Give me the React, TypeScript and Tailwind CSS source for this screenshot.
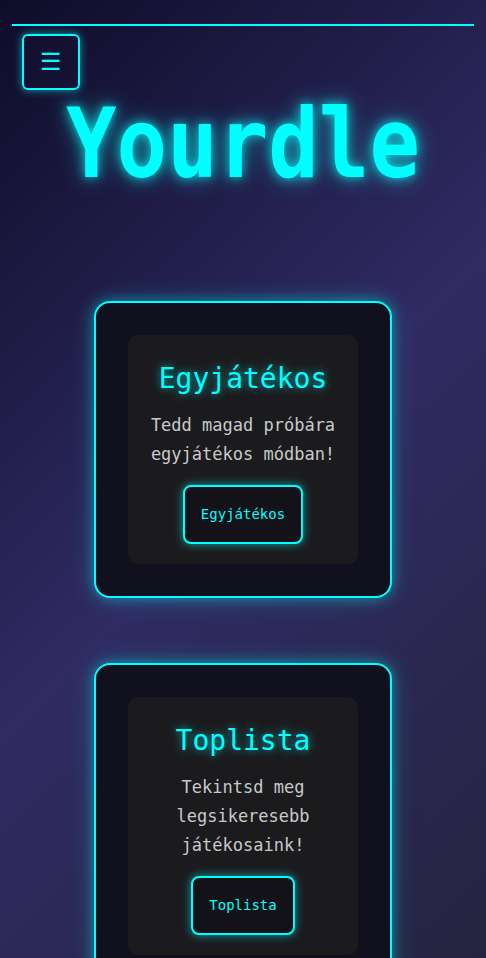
import React from "react";

const mono = "font-['DejaVu_Sans_Mono','Liberation_Mono',monospace]";

interface ModeCardProps {
  title: string;
  lines: string[];
  button: string;
}

function ModeCard({ title, lines, button }: ModeCardProps) {
  return (
    <div className="w-[298px] rounded-[16px] border-2 border-[#00ffff] bg-[#10101f] p-8 shadow-[0_0_14px_rgba(0,255,255,0.45),0_0_30px_rgba(0,255,255,0.15)]">
      <div className="flex flex-col items-center rounded-[10px] bg-[#1b1b1e] px-4 pt-6 pb-5">
        <h2 className="text-[28px] leading-[40px] text-[#00ffff] [text-shadow:0_0_8px_rgba(0,255,255,0.7)]">
          {title}
        </h2>
        <p className="mt-3 text-center text-[17px] leading-[29px] text-[#c9c9c9]">
          {lines.map((l, i) => (
            <span key={i} className="block">
              {l}
            </span>
          ))}
        </p>
        <button className="mt-4 rounded-[8px] border-2 border-[#00ffff] bg-[#121218] px-4 py-[18px] text-[14px] leading-[19px] text-[#00ffff] shadow-[0_0_10px_rgba(0,255,255,0.6)]">
          {button}
        </button>
      </div>
    </div>
  );
}

export default function App() {
  return (
    <div
      className={`${mono} min-h-[958px] w-full overflow-hidden bg-[linear-gradient(135deg,#0f0c29_0%,#302b63_50%,#24243e_100%)]`}
    >
      {/* fejléc */}
      <div className="mx-3 pt-6">
        <div className="h-[2px] bg-[#00ffff]" />
        <button className="mt-2 ml-[10px] flex h-[56px] w-[58px] items-center justify-center rounded-[6px] border-2 border-[#00ffff] text-[24px] text-[#00ffff] shadow-[0_0_8px_rgba(0,255,255,0.6)]">
          ☰
        </button>
      </div>

      {/* cím */}
      <h1 className="mt-[4px] scale-y-[1.15] text-center text-[84px] leading-[100px] font-bold text-[#00ffff] [text-shadow:0_0_10px_rgba(0,255,255,0.8),0_0_22px_rgba(0,255,255,0.5)]">
        Yourdle
      </h1>

      <div className="mt-[107px] flex flex-col items-center gap-[65px]">
        <ModeCard
          title="Egyjátékos"
          lines={["Tedd magad próbára", "egyjátékos módban!"]}
          button="Egyjátékos"
        />
        <ModeCard
          title="Toplista"
          lines={["Tekintsd meg", "legsikeresebb", "játékosaink!"]}
          button="Toplista"
        />
      </div>
    </div>
  );
}
